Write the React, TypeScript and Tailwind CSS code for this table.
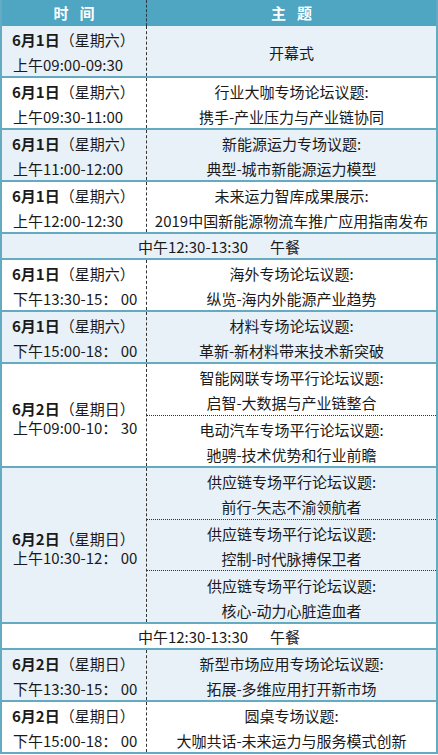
import React from "react";

type Session = {
  kind: "session";
  light: boolean;
  date: string;
  week: string;
  time: string;
  h: string;
  topics: string[][];
};
type Lunch = { kind: "lunch"; light: boolean };
type Row = Session | Lunch;

const H2 = "h-[52px]";

const rows: Row[] = [
  { kind: "session", light: true, h: H2, date: "6月1日", week: "（星期六）", time: "上午09:00-09:30", topics: [["开幕式"]] },
  { kind: "session", light: false, h: H2, date: "6月1日", week: "（星期六）", time: "上午09:30-11:00", topics: [["行业大咖专场论坛议题:", "携手-产业压力与产业链协同"]] },
  { kind: "session", light: true, h: H2, date: "6月1日", week: "（星期六）", time: "上午11:00-12:00", topics: [["新能源运力专场议题:", "典型-城市新能源运力模型"]] },
  { kind: "session", light: false, h: H2, date: "6月1日", week: "（星期六）", time: "上午12:00-12:30", topics: [["未来运力智库成果展示:", "2019中国新能源物流车推广应用指南发布"]] },
  { kind: "lunch", light: true },
  { kind: "session", light: false, h: H2, date: "6月1日", week: "（星期六）", time: "下午13:30-15： 00", topics: [["海外专场论坛议题:", "纵览-海内外能源产业趋势"]] },
  { kind: "session", light: true, h: H2, date: "6月1日", week: "（星期六）", time: "下午15:00-18： 00", topics: [["材料专场论坛议题:", "革新-新材料带来技术新突破"]] },
  {
    kind: "session",
    light: false,
    h: "h-[104px]",
    date: "6月2日",
    week: "（星期日）",
    time: "上午09:00-10： 30",
    topics: [
      ["智能网联专场平行论坛议题:", "启智-大数据与产业链整合"],
      ["电动汽车专场平行论坛议题:", "驰骋-技术优势和行业前瞻"],
    ],
  },
  {
    kind: "session",
    light: true,
    h: "h-[156px]",
    date: "6月2日",
    week: "（星期日）",
    time: "上午10:30-12： 00",
    topics: [
      ["供应链专场平行论坛议题:", "前行-矢志不渝领航者"],
      ["供应链专场平行论坛议题:", "控制-时代脉搏保卫者"],
      ["供应链专场平行论坛议题:", "核心-动力心脏造血者"],
    ],
  },
  { kind: "lunch", light: false },
  { kind: "session", light: true, h: H2, date: "6月2日", week: "（星期日）", time: "下午13:30-15： 00", topics: [["新型市场应用专场论坛议题:", "拓展-多维应用打开新市场"]] },
  { kind: "session", light: false, h: H2, date: "6月2日", week: "（星期日）", time: "下午15:00-18： 00", topics: [["圆桌专场议题:", "大咖共话-未来运力与服务模式创新"]] },
];

function SessionRow({ r }: { r: Session }) {
  const multi = r.topics.length > 1;
  return (
    <div
      className={`${r.h} flex border-b-2 border-[#64abc1] overflow-hidden ${r.light ? "bg-[#e8f0f8]" : "bg-white"}`}
    >
      <div
        className={`w-[145px] shrink-0 h-full border-r border-dashed border-[#333333] pl-[10px] flex flex-col ${
          multi ? "justify-center pt-[5px] leading-[19px]" : "justify-start pt-[1px] leading-[25px]"
        }`}
      >
        <div className="whitespace-nowrap">
          <span className="font-bold">{r.date}</span>
          <span>{r.week}</span>
        </div>
        <div className="whitespace-nowrap pl-[1px]">{r.time}</div>
      </div>
      <div className="flex-1 h-full flex flex-col">
        {r.topics.map((t, i) => (
          <div
            key={i}
            className={`flex-1 min-h-0 flex flex-col items-center justify-center pt-[2px] leading-[25px] ${
              i > 0 ? "border-t border-dotted border-[#333333]" : ""
            }`}
          >
            {t.map((line, j) => (
              <div key={j} className="whitespace-nowrap">
                {line}
              </div>
            ))}
          </div>
        ))}
      </div>
    </div>
  );
}

function LunchRow({ r }: { r: Lunch }) {
  return (
    <div
      className={`h-[26px] flex items-center justify-center pt-[2px] border-b-2 border-[#64abc1] leading-[22px] ${
        r.light ? "bg-[#e8f0f8]" : "bg-white"
      }`}
    >
      <span className="whitespace-nowrap">中午12:30-13:30</span>
      <span className="ml-[22px]">午餐</span>
    </div>
  );
}

export default function App() {
  return (
    <div className="w-[438px] h-[755px] overflow-hidden bg-white">
      <div className="w-[438px] border-x-2 border-[#64abc1] font-['Noto_Sans_CJK_SC',sans-serif] text-[15px] text-[#1a1a1a]">
        <div className="flex h-[26px] bg-[#4ea6c3] text-white font-bold leading-[26px]">
          <div className="w-[145px] shrink-0 border-r border-dashed border-[#2a3a40] flex items-center justify-center gap-[11px]">
            <span>时</span>
            <span>间</span>
          </div>
          <div className="flex-1 flex items-center justify-center gap-[11px]">
            <span>主</span>
            <span>题</span>
          </div>
        </div>
        {rows.map((r, i) =>
          r.kind === "lunch" ? <LunchRow key={i} r={r} /> : <SessionRow key={i} r={r} />
        )}
      </div>
    </div>
  );
}
